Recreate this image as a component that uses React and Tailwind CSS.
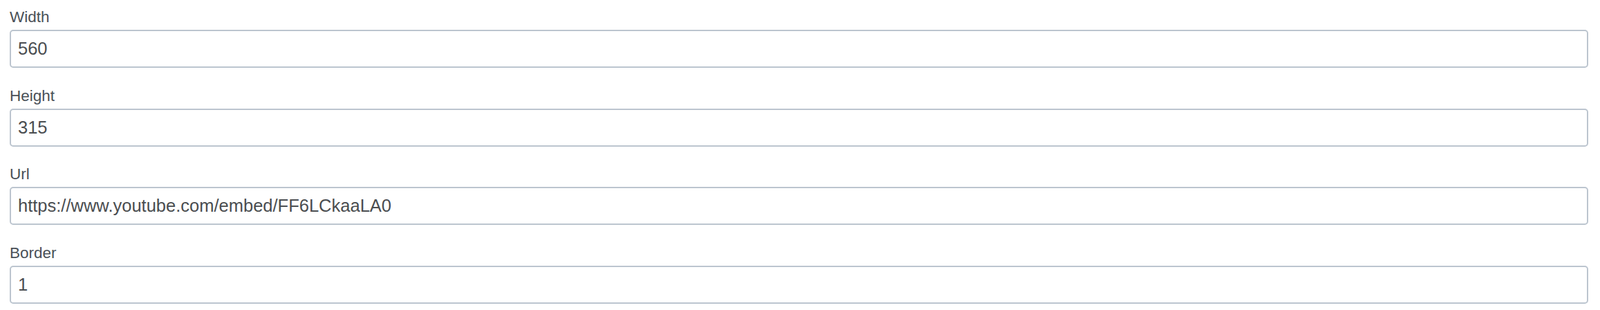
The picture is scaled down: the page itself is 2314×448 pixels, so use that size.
import React from "react";

const fields = [
  { label: "Width", value: "560" },
  { label: "Height", value: "315" },
  { label: "Url", value: "https://www.youtube.com/embed/FF6LCkaaLA0" },
  { label: "Border", value: "1" },
];

const App = () => {
  return (
    <div className="min-h-screen bg-white pt-[8px] pl-[14px] pr-[17px] font-['Liberation_Sans',Arial,sans-serif]">
      {fields.map((field) => (
        <div key={field.label} className="mb-[23.7px]">
          <label className="block mb-[2px] text-[22.5px] leading-[33px] text-[#495057]">
            {field.label}
          </label>
          <input
            type="text"
            readOnly
            value={field.value}
            className="block w-full h-[55px] px-[10px] border-2 border-[#bcc5cf] rounded-[5px] bg-white text-[25.5px] text-[#4a4d50] outline-none"
          />
        </div>
      ))}
    </div>
  );
};

export default App;
